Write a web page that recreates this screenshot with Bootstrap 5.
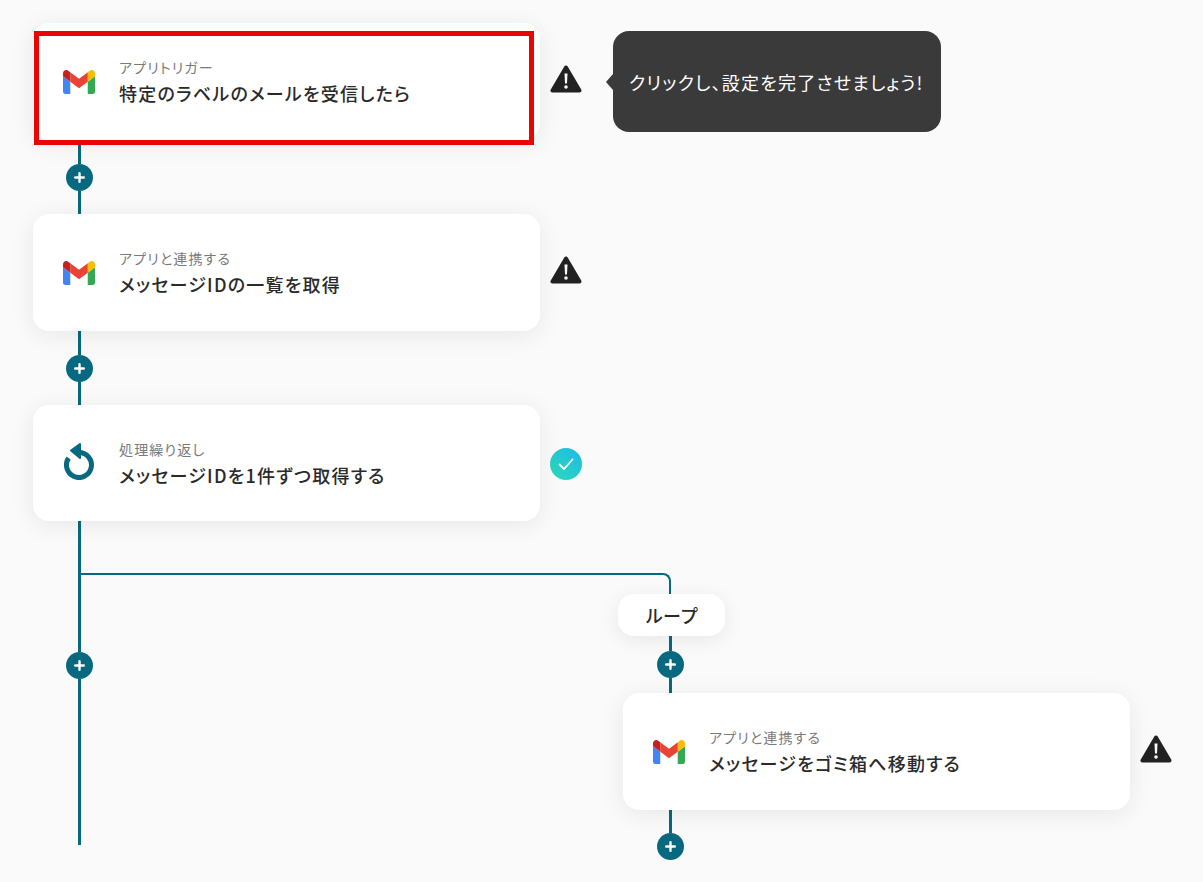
<!doctype html>
<html lang="ja">
<head>
<meta charset="utf-8">
<title>フロー</title>
<link href="https://cdn.jsdelivr.net/npm/bootstrap@5.3.0/dist/css/bootstrap.min.css" rel="stylesheet">
<style>
body{background:#fafafa;font-family:"Noto Sans CJK JP","Noto Sans",sans-serif;color:#2a2a2a;height:882px;overflow:hidden}
.flow-canvas{padding:23px 0 0 33px}
.step-card{width:507px;height:117px;border:0;border-radius:16px;background:#fff;box-shadow:0 4px 24px rgba(0,0,0,.08);padding-left:30px;gap:24px;position:relative}
.step-card.short{height:116px;padding-top:2px}
.step-label{font-size:14px;line-height:18px;color:#7a7a7a;font-feature-settings:"palt";letter-spacing:1.15px}
.step-title{font-size:18px;line-height:26px;font-weight:500;color:#2a2a2a;margin-top:4px;font-feature-settings:"palt";letter-spacing:1.22px}
.red-frame{position:absolute;left:1px;top:8px;width:500px;height:114px;border:5px solid #e80505;pointer-events:none}
.gm{width:32px;height:24px;flex:none;display:block;margin-top:1px}
.loop-ic{width:30px;height:38px;flex:none;display:block;margin:-6px 1px 0 1px}
.side-warn{width:32px;height:28px;margin-left:10px;margin-bottom:5px;flex:none}
.side-ok{width:32px;height:32px;margin:2px 0 0 10px;flex:none;background:linear-gradient(45deg,#2bdcb5,#1fb8ea)}
.side-ok svg{width:18px;height:18px}
.tip{position:relative;width:328px;height:101px;margin-left:31px;background:#3a3a3a;color:#fff;border-radius:16px;font-size:18px;font-feature-settings:"palt";padding:2px 0 0 16px;letter-spacing:1.22px}
.tip::before{content:"";position:absolute;left:-7px;top:43px;border:8px solid transparent;border-left:0;border-right:7px solid #3a3a3a}
.conn{width:27px;margin-left:33px}
.conn.gap74{height:74px}
.conn.trunk{height:324px}
.conn.loop-top{height:57px;margin-left:33.5px}
.conn.loop-end{height:50px;margin-left:33.5px}
.wire{width:3px;background:#07697f;flex:1 1 0}
.wire.fixed131{flex:0 0 131px}
.plus{width:27px;height:27px;background:#07697f;flex:none}
.plus svg{width:11px;height:11px}
.branch-col{padding-left:530px}
.elbow{width:590px;height:21px;margin:52px 0 0 -542px;border-top:2px solid #07697f;border-right:2px solid #07697f;border-top-right-radius:8px}
.pill-tag{width:107px;height:42px;margin-left:-5px;background:#fff;border-radius:16px;box-shadow:0 4px 20px rgba(0,0,0,.08);font-size:18px;font-weight:500;position:relative}
</style>
</head>
<body>
<svg width="0" height="0" class="d-block">
  <symbol id="gmail" viewBox="52 42 88 66">
    <path fill="#4285f4" d="M58 108h14V74L52 59v43c0 3.32 2.69 6 6 6"/>
    <path fill="#34a853" d="M120 108h14c3.32 0 6-2.69 6-6V59l-20 15"/>
    <path fill="#fbbc04" d="M120 48v26l20-15v-8c0-7.42-8.47-11.65-14.4-7.2"/>
    <path fill="#ea4335" d="M72 74V48l24 18 24-18v26L96 92"/>
    <path fill="#c5221f" d="M52 51v8l20 15V48l-5.6-4.2c-5.94-4.45-14.4-.22-14.4 7.2"/>
  </symbol>
  <symbol id="warn" viewBox="0 0 32 28">
    <path fill="#222" stroke="#222" stroke-width="4" stroke-linejoin="round" d="M16 2.5 2.5 25.5h27z"/>
    <path fill="#fafafa" d="M14.5 8.5h3l-.5 10h-2z"/>
    <circle fill="#fafafa" cx="16" cy="22" r="1.8"/>
  </symbol>
  <symbol id="plus-s" viewBox="0 0 11 11">
    <path stroke="#fff" stroke-width="2.4" stroke-linecap="round" d="M5.5 1.2v8.6M1.2 5.5h8.6"/>
  </symbol>
</svg>

<div class="flow-canvas">
  <div class="d-flex align-items-center">
    <div class="card step-card flex-row align-items-center">
      <svg class="gm"><use href="#gmail"/></svg>
      <div><div class="step-label">アプリトリガー</div><div class="step-title">特定のラベルのメールを受信したら</div></div>
      <div class="red-frame"></div>
    </div>
    <svg class="side-warn"><use href="#warn"/></svg>
    <div class="tip d-flex align-items-center">クリックし、設定を完了させましょう!</div>
  </div>
  <div class="conn gap74 d-flex flex-column align-items-center"><div class="wire"></div><div class="plus rounded-circle d-flex align-items-center justify-content-center"><svg><use href="#plus-s"/></svg></div><div class="wire"></div></div>

  <div class="d-flex align-items-center">
    <div class="card step-card flex-row align-items-center">
      <svg class="gm"><use href="#gmail"/></svg>
      <div><div class="step-label">アプリと連携する</div><div class="step-title">メッセージIDの一覧を取得</div></div>
    </div>
    <svg class="side-warn"><use href="#warn"/></svg>
  </div>
  <div class="conn gap74 d-flex flex-column align-items-center"><div class="wire"></div><div class="plus rounded-circle d-flex align-items-center justify-content-center"><svg><use href="#plus-s"/></svg></div><div class="wire"></div></div>

  <div class="d-flex align-items-center">
    <div class="card step-card short flex-row align-items-center">
      <svg class="loop-ic" viewBox="0 0 30 38">
        <path fill="none" stroke="#07697f" stroke-width="5" d="M15 10.5A12.5 12.5 0 1 1 4.6 16"/>
        <path fill="#07697f" stroke="#07697f" stroke-width="2" stroke-linejoin="round" d="M7 8.5 16 2v14z"/>
      </svg>
      <div><div class="step-label">処理繰り返し</div><div class="step-title">メッセージIDを1件ずつ取得する</div></div>
    </div>
    <div class="side-ok rounded-circle d-flex align-items-center justify-content-center">
      <svg viewBox="0 0 18 18"><path fill="none" stroke="#fff" stroke-width="1.8" stroke-linecap="round" stroke-linejoin="round" d="M2.5 9.5 7 14l8.5-9.5"/></svg>
    </div>
  </div>

  <div class="d-flex">
    <div class="conn trunk d-flex flex-column align-items-center"><div class="wire fixed131"></div><div class="plus rounded-circle d-flex align-items-center justify-content-center"><svg><use href="#plus-s"/></svg></div><div class="wire"></div></div>
    <div class="branch-col">
      <div class="elbow"></div>
      <div class="pill-tag d-flex align-items-center justify-content-center">ループ</div>
      <div class="conn loop-top d-flex flex-column align-items-center"><div class="wire"></div><div class="plus rounded-circle d-flex align-items-center justify-content-center"><svg><use href="#plus-s"/></svg></div><div class="wire"></div></div>
      <div class="d-flex align-items-center">
        <div class="card step-card flex-row align-items-center">
          <svg class="gm"><use href="#gmail"/></svg>
          <div><div class="step-label">アプリと連携する</div><div class="step-title">メッセージをゴミ箱へ移動する</div></div>
        </div>
        <svg class="side-warn"><use href="#warn"/></svg>
      </div>
      <div class="conn loop-end d-flex flex-column align-items-center"><div class="wire"></div><div class="plus rounded-circle d-flex align-items-center justify-content-center"><svg><use href="#plus-s"/></svg></div></div>
    </div>
  </div>
</div>
<script src="https://cdn.jsdelivr.net/npm/bootstrap@5.3.0/dist/js/bootstrap.bundle.min.js"></script>
</body>
</html>
